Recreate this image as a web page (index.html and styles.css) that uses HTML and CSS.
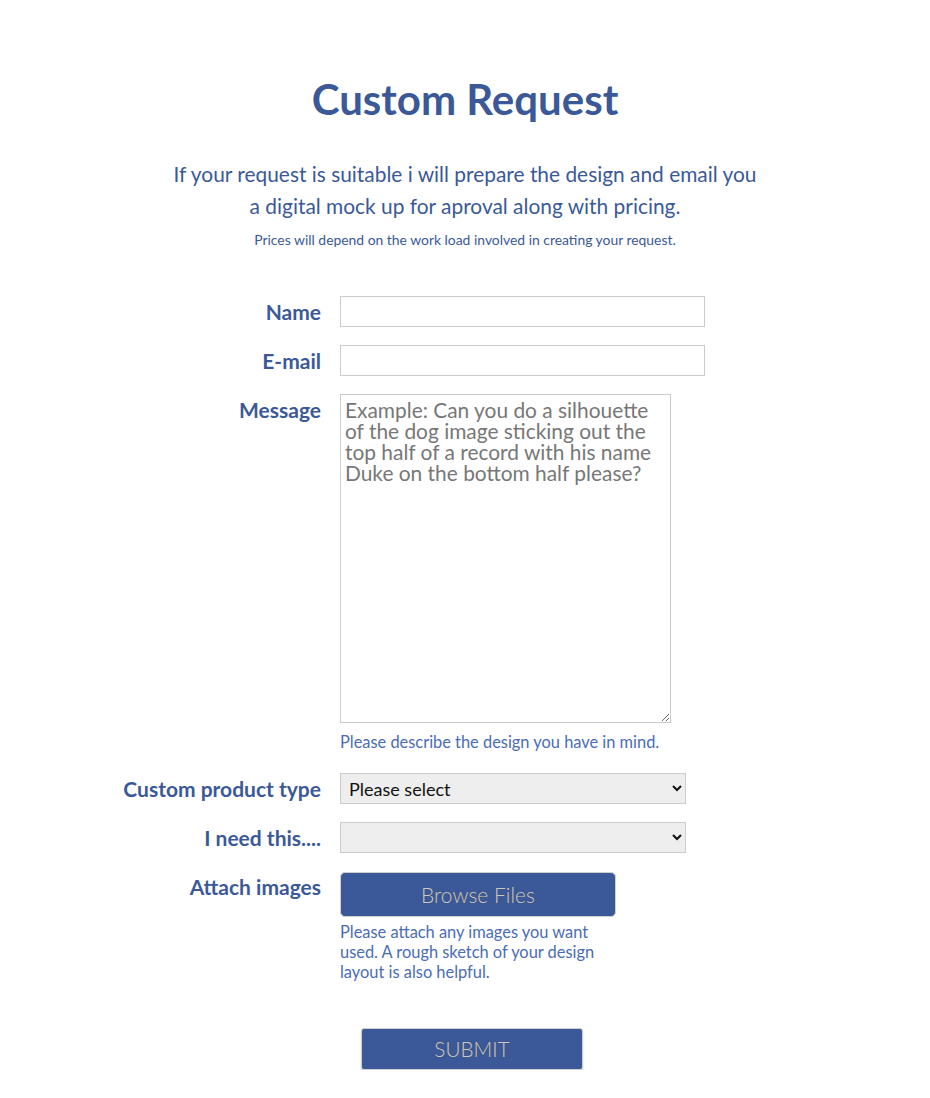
FILE: index.html
```
<!DOCTYPE html>
<html lang="en">
<head>
  <meta charset="UTF-8">
  <meta name="viewport" content="width=device-width, initial-scale=1.0">
  <title>Custom Request</title>
  <link rel="stylesheet" href="styles.css">
</head>
<body>
  <div class="page">
    <h1>Custom Request</h1>
    <p class="intro">If your request is suitable i will prepare the design and email you<br>a digital mock up for aproval along with pricing.</p>
    <p class="note">Prices will depend on the work load involved in creating your request.</p>

    <form id="requestForm" class="request-form">
      <label for="name" class="label">Name</label>
      <div class="field">
        <input type="text" id="name" name="name" class="text-input">
      </div>

      <label for="email" class="label">E-mail</label>
      <div class="field">
        <input type="email" id="email" name="email" class="text-input">
      </div>

      <label for="message" class="label">Message</label>
      <div class="field">
        <textarea id="message" name="message" placeholder="Example: Can you do a silhouette of the dog image sticking out the top half of a record with his name Duke on the bottom half please?"></textarea>
        <div class="help help-message">Please describe the design you have in mind.</div>
      </div>

      <label for="product" class="label">Custom product type</label>
      <div class="field">
        <select id="product" name="product" class="select-input">
          <option>Please select</option>
        </select>
      </div>

      <label for="when" class="label">I need this....</label>
      <div class="field">
        <select id="when" name="when" class="select-input">
          <option></option>
        </select>
      </div>

      <label for="files" class="label">Attach images</label>
      <div class="field">
        <button type="button" class="browse-btn">Browse Files</button>
        <div class="help help-narrow">Please attach any images you want used. A rough sketch of your design layout is also helpful.</div>
      </div>

      <div class="form-actions">
        <button type="submit" class="submit-btn">SUBMIT</button>
      </div>
    </form>
  </div>
</body>
</html>
```
FILE: styles.css
```
body {
  margin: 0;
  font-family: Lato, "Open Sans", sans-serif;
  background-color: #fff;
  color: #3b5998;
}

.page {
  padding-top: 74px;
  text-align: center;
}

h1 {
  margin: 0;
  font-size: 42px;
  font-weight: bold;
  line-height: 50px;
  color: #3b5998;
}

.intro {
  margin: 34px 0 0;
  font-size: 20.9px;
  line-height: 32px;
}

.note {
  margin: 9px 0 0;
  font-size: 13.9px;
  line-height: 18px;
}

.request-form {
  width: 688px;
  margin: 47px auto 0;
  display: grid;
  grid-template-columns: 200px 1fr;
  column-gap: 19px;
  row-gap: 18px;
  text-align: left;
}

.label {
  text-align: right;
  font-weight: bold;
  font-size: 21px;
  line-height: 31px;
  color: #3b5998;
}

.text-input {
  display: block;
  box-sizing: border-box;
  width: 365px;
  height: 31px;
  border: 1px solid #ccc;
  padding: 4px 6px;
  font-size: 16px;
}

textarea {
  display: block;
  box-sizing: border-box;
  width: 331px;
  height: 329px;
  border: 1px solid #ccc;
  padding: 4px 4px;
  font-family: Lato, "Open Sans", sans-serif;
  font-size: 20.9px;
  line-height: 21px;
  color: #555;
}

textarea::placeholder {
  color: #777;
}

.help {
  font-size: 16.4px;
  line-height: 20px;
  color: #4a6db5;
}

.help-message {
  margin: 9px 0 3px;
}

.help-narrow {
  width: 262px;
  margin-top: 5px;
}

.select-input {
  display: block;
  box-sizing: border-box;
  width: 346px;
  height: 31px;
  border: 1px solid #ccc;
  border-radius: 0;
  background-color: #eee;
  padding: 0 4px;
  font-family: Lato, "Open Sans", sans-serif;
  font-size: 18px;
  color: #111;
}

.browse-btn {
  display: block;
  width: 276px;
  height: 45px;
  margin-top: 1px;
  border: 1px solid #d0d0d0;
  border-radius: 5px;
  background-color: #3b5998;
  color: #c8c8c8;
  font-family: Lato, "Open Sans", sans-serif;
  font-size: 21px;
  font-weight: 300;
  text-shadow: 0 0 1px #555;
  cursor: pointer;
}

.form-actions {
  grid-column: 1 / 3;
  padding: 28px 0 0 240px;
}

.submit-btn {
  width: 222px;
  height: 42px;
  border: 1px solid #d0d0d0;
  border-radius: 3px;
  background-color: #3b5998;
  color: #c8c8c8;
  font-family: Lato, "Open Sans", sans-serif;
  font-size: 20.7px;
  font-weight: 300;
  text-shadow: 0 0 1px #555;
  box-shadow: 0 1px 2px rgba(0, 0, 0, 0.2);
  cursor: pointer;
}
```
